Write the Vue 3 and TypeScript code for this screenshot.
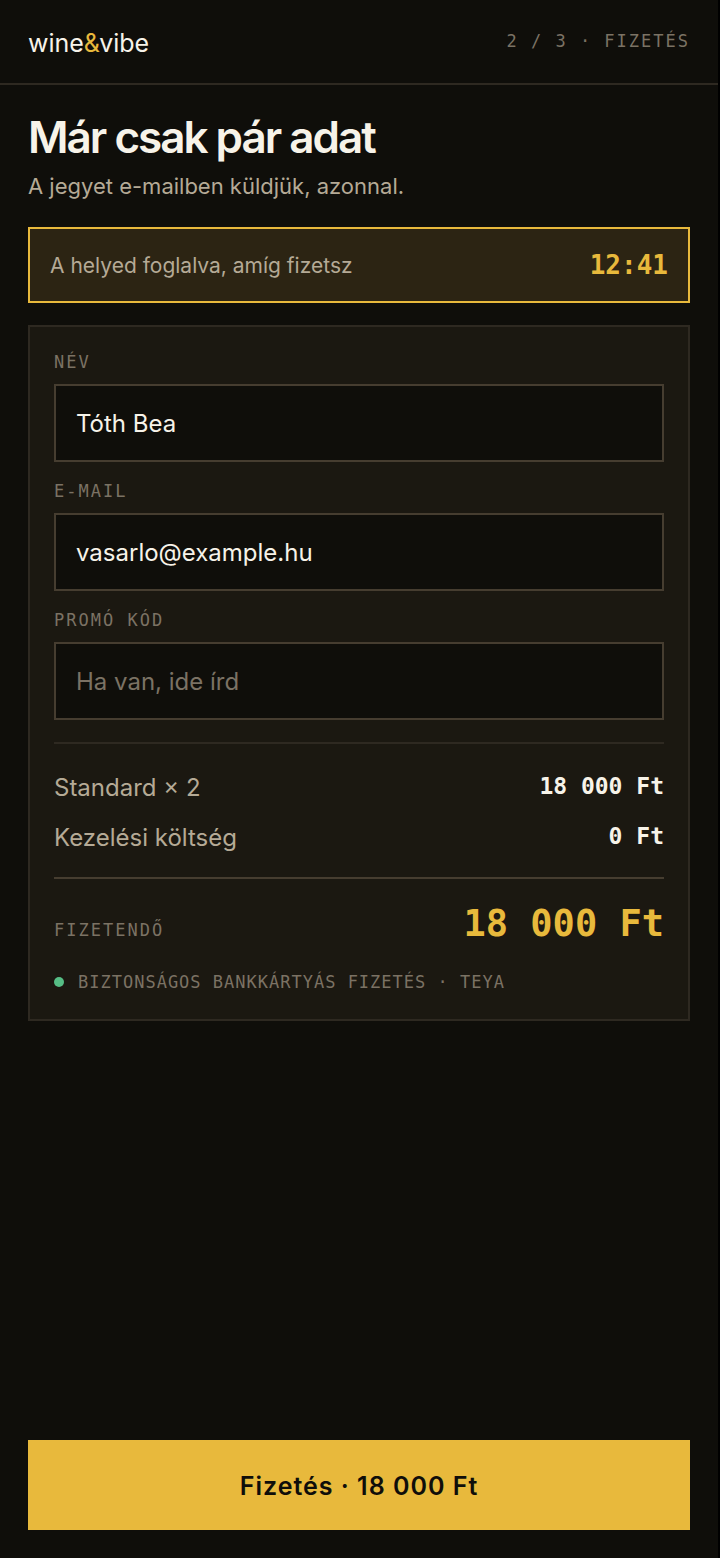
<script setup lang="ts">
import { ref } from 'vue'

interface Line {
  label: string
  amount: string
}

const name = ref('Tóth Bea')
const email = ref('vasarlo@example.hu')
const promo = ref('')
const timeLeft = '12:41'
const total = '18 000 Ft'
const lines: Line[] = [
  { label: 'Standard × 2', amount: '18 000 Ft' },
  { label: 'Kezelési költség', amount: '0 Ft' },
]
</script>

<template>
  <div class="page">
    <header class="topbar">
      <a class="brand" href="#">wine<span class="amp">&amp;</span>vibe</a>
      <span class="step">2 / 3 · FIZETÉS</span>
    </header>

    <form class="checkout" @submit.prevent>
      <h1>Már csak pár adat</h1>
      <p class="lead">A jegyet e-mailben küldjük, azonnal.</p>

      <div class="hold">
        <span class="hold-text">A helyed foglalva, amíg fizetsz</span>
        <strong class="timer">{{ timeLeft }}</strong>
      </div>

      <section class="card">
        <div class="fields">
          <div class="field">
            <label for="name">NÉV</label>
            <input id="name" v-model="name" type="text" autocomplete="off" />
          </div>
          <div class="field">
            <label for="email">E-MAIL</label>
            <input id="email" v-model="email" type="email" autocomplete="off" />
          </div>
          <div class="field">
            <label for="promo">PROMÓ KÓD</label>
            <input id="promo" v-model="promo" type="text" placeholder="Ha van, ide írd" />
          </div>
        </div>

        <dl class="lines">
          <div v-for="line in lines" :key="line.label" class="line">
            <dt>{{ line.label }}</dt>
            <dd>{{ line.amount }}</dd>
          </div>
        </dl>

        <div class="total">
          <span class="total-label">FIZETENDŐ</span>
          <strong class="total-amount">{{ total }}</strong>
        </div>

        <p class="secure"><span class="dot"></span>BIZTONSÁGOS BANKKÁRTYÁS FIZETÉS · TEYA</p>
      </section>

      <button class="pay" type="submit">Fizetés · {{ total }}</button>
    </form>
  </div>
</template>

<style>
body {
  margin: 0;
  background: #000;
}
</style>

<style scoped>
.page {
  --bg: #0f0e0a;
  --panel: #1b1811;
  --line: #2e2921;
  --line-strong: #463d30;
  --text: #f7f3e9;
  --soft: #b5aa96;
  --dim: #7b7264;
  --gold: #e8b93c;
  --mono: "DejaVu Sans Mono", monospace;
  display: flex;
  flex-direction: column;
  box-sizing: border-box;
  min-height: 100vh;
  margin-right: 2px;
  background: var(--bg);
  color: var(--text);
  font-family: Inter, sans-serif;
}

.topbar {
  display: flex;
  align-items: flex-start;
  justify-content: space-between;
  padding: 24px 28px 20px;
  border-bottom: 2px solid var(--line);
}

.brand {
  color: var(--text);
  font-size: 25px;
  line-height: 39px;
  text-decoration: none;
}

.amp {
  color: var(--gold);
}

.step,
label,
.total-label,
.secure {
  color: var(--dim);
  font-family: var(--mono);
  font-size: 17px;
  letter-spacing: 2px;
}

.step {
  line-height: 34px;
}

.checkout {
  display: flex;
  flex: 1;
  flex-direction: column;
  padding: 28px;
}

h1 {
  margin: 0;
  font-size: 44px;
  font-weight: 600;
  letter-spacing: -2px;
  line-height: 48px;
}

.lead {
  margin: 11px 0 27px;
  color: var(--soft);
  font-size: 22px;
  line-height: 28px;
}

.hold {
  display: flex;
  align-items: flex-start;
  justify-content: space-between;
  padding: 20px 20px 18px;
  border: 2px solid var(--gold);
  background: #2c2413;
}

.hold-text {
  color: var(--soft);
  font-size: 21px;
  line-height: 34px;
}

.timer {
  color: var(--gold);
  font-family: var(--mono);
  font-size: 26px;
  line-height: 32px;
}

.card {
  margin-top: 22px;
  padding: 24px;
  border: 2px solid var(--line);
  background: var(--panel);
}

.fields {
  display: flex;
  flex-direction: column;
  gap: 18px;
}

.field {
  display: flex;
  flex-direction: column;
  gap: 11px;
}

label {
  line-height: 22px;
}

input {
  box-sizing: border-box;
  width: 100%;
  height: 78px;
  padding: 0 20px;
  border: 2px solid var(--line-strong);
  border-radius: 0;
  outline: none;
  background: var(--bg);
  color: var(--text);
  font-family: inherit;
  font-size: 24px;
}

input::placeholder {
  color: var(--dim);
  opacity: 1;
}

.lines {
  margin: 22px 0 0;
  padding: 19px 0 14px;
  border-top: 2px solid var(--line);
  border-bottom: 2px solid var(--line-strong);
}

.line {
  display: flex;
  align-items: flex-start;
  justify-content: space-between;
}

dt {
  color: var(--soft);
  font-size: 24px;
  line-height: 50px;
}

dd {
  margin: 0;
  font-family: var(--mono);
  font-size: 23px;
  font-weight: 700;
  line-height: 46px;
}

.total {
  display: flex;
  align-items: baseline;
  justify-content: space-between;
  padding-top: 21px;
  line-height: 48px;
}

.total-amount {
  color: var(--gold);
  font-family: var(--mono);
  font-size: 37px;
}

.secure {
  display: flex;
  align-items: center;
  gap: 14px;
  margin: 15px 0 0;
  letter-spacing: 1px;
  line-height: 26px;
}

.dot {
  width: 10px;
  height: 10px;
  border-radius: 50%;
  background: #56bd85;
}

.pay {
  height: 90px;
  margin-top: auto;
  padding: 2px 0 0;
  border: 0;
  border-radius: 0;
  background: var(--gold);
  color: #0f0e0a;
  font-family: inherit;
  font-size: 25px;
  font-weight: 600;
  letter-spacing: 1px;
}
</style>
